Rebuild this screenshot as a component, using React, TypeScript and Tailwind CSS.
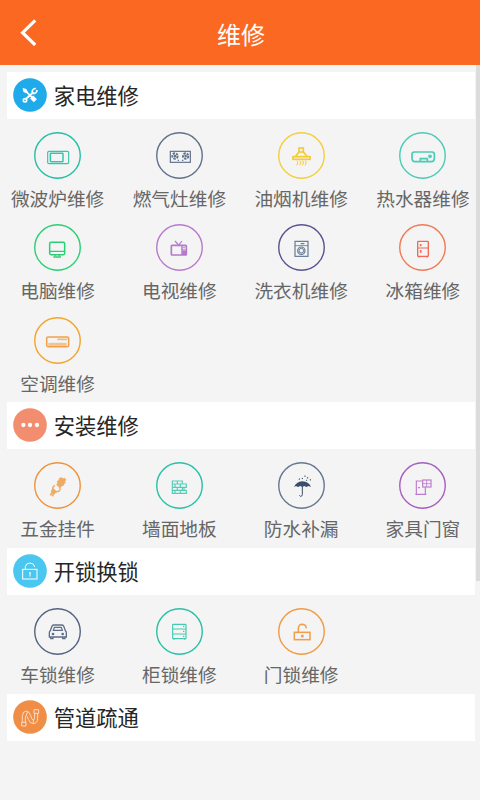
import React from "react";

type Item = { name: string; ring: string; color: string; icon: React.ReactNode };
type Section = { title: string; badge: string; icon: React.ReactNode; items: Item[] };

// Item icons are drawn on a 141 unit grid, section icons on a 102 unit grid
const sections: Section[] = [
  {
    title: "家电维修",
    badge: "#1faaea",
    icon: (
      <>
        <path d="M36 37L65 66" strokeWidth={5} />
        <path d="M29 30L40 33L44 41L39 46L31 41Z" fill="currentColor" stroke="none" />
        <path d="M56 57L67 68" strokeWidth={13} />
        <path d="M38 64L61 43" strokeWidth={6} />
        <path d="M68 31L61 34Q55 39 60 45Q66 49 71 41L72 36" strokeWidth={5} />
        <circle cx={36} cy={67} r={5} strokeWidth={5} />
      </>
    ),
    items: [
      {
        name: "微波炉维修",
        ring: "#25bfa3",
        color: "#36c5ad",
        icon: (
          <>
            <rect x={41} y={58} width={63} height={37} rx={4} />
            <rect x={49} y={64} width={38} height={25} rx={2} strokeWidth={4.5} />
          </>
        ),
      },
      {
        name: "燃气灶维修",
        ring: "#60718c",
        color: "#60718c",
        icon: (
          <>
            <rect x={43} y={58} width={60} height={33} />
            <circle cx={57} cy={72} r={8} strokeWidth={6} strokeDasharray="7 3" />
            <circle cx={57} cy={72} r={2} />
            <circle cx={89} cy={72} r={8} strokeWidth={6} strokeDasharray="7 3" />
            <circle cx={89} cy={72} r={2} />
            <path d="M65 85h4M78 85h4" />
          </>
        ),
      },
      {
        name: "油烟机维修",
        ring: "#f3cf3d",
        color: "#f2cb38",
        icon: (
          <>
            <rect x={63} y={48} width={13} height={12} strokeWidth={5} />
            <path d="M63 60L53 73M76 60L87 73" strokeWidth={5} />
            <rect x={45} y={74} width={51} height={8} strokeWidth={5} />
            <path
              d="M56 86q6 3 3 7l-3 7M65 86q6 3 3 7l-3 7M73 86q6 3 3 7l-3 7M81 86q6 3 3 7l-3 7"
              strokeWidth={3}
            />
          </>
        ),
      },
      {
        name: "热水器维修",
        ring: "#4accb5",
        color: "#4accb5",
        icon: (
          <>
            <path
              d="M46 60H99Q106 60 106 67V79Q106 89 97 89H48Q39 89 39 79V67Q39 60 46 60Z"
              strokeWidth={5}
            />
            <path d="M64 89V80H85V89" strokeWidth={5} />
            <circle cx={93} cy={73} r={5.5} fill="currentColor" stroke="none" />
          </>
        ),
      },
      {
        name: "电脑维修",
        ring: "#2bce75",
        color: "#2bce75",
        icon: (
          <>
            <rect x={47} y={55} width={45} height={37} rx={4} strokeWidth={4.5} />
            <path d="M47 82H92M63 92V97M76 92V97" />
            <path d="M58 99H81" strokeWidth={4.5} />
          </>
        ),
      },
      {
        name: "电视维修",
        ring: "#b67bcd",
        color: "#b578cc",
        icon: (
          <>
            <path d="M57 51L68 63L78 51" />
            <rect x={46} y={64} width={45} height={29} rx={2} strokeWidth={5} />
            <path d="M78 64V93" strokeWidth={4.5} />
            <rect x={79} y={79} width={12} height={14} fill="currentColor" stroke="none" />
            <path d="M82 70h4M82 76h4" />
          </>
        ),
      },
      {
        name: "洗衣机维修",
        ring: "#59538f",
        color: "#627891",
        icon: (
          <>
            <rect x={51} y={52} width={39} height={45} />
            <path d="M51 65H90" strokeWidth={2.5} />
            <path d="M68 59H79" />
            <circle cx={70} cy={80} r={11} />
            <circle cx={70} cy={80} r={7} strokeWidth={3} />
          </>
        ),
      },
      {
        name: "冰箱维修",
        ring: "#f07a55",
        color: "#f26955",
        icon: (
          <>
            <rect x={56} y={52} width={32} height={45} rx={2} strokeWidth={4} />
            <path d="M56 72H88M60 97v4M84 97v4" />
            <path d="M65 60v7M65 78v8" strokeWidth={5} />
          </>
        ),
      },
      {
        name: "空调维修",
        ring: "#f2a42c",
        color: "#f0a04c",
        icon: (
          <>
            <rect x={38} y={60} width={66} height={29} rx={4} strokeWidth={4.5} />
            <path d="M70 67H100" strokeWidth={5} opacity={0.7} />
            <path d="M43 82H98" strokeWidth={9} opacity={0.6} />
          </>
        ),
      },
    ],
  },
  {
    title: "安装维修",
    badge: "#f28d6f",
    icon: (
      <g fill="currentColor" stroke="none">
        <circle cx={31} cy={51} r={6.5} />
        <circle cx={51} cy={51} r={6.5} />
        <circle cx={72} cy={51} r={6.5} />
      </g>
    ),
    items: [
      {
        name: "五金挂件",
        ring: "#ec943d",
        color: "#edab65",
        icon: (
          <>
            <path
              d="M76 49L84 47L87 50L93 49L96 54L92 58L95 61L89 66L90 69L83 72L78 78L68 69L71 62L69 59L75 54Z"
              fill="currentColor"
              strokeWidth={2}
            />
            <path d="M63 70Q55 73 57 81Q61 89 70 89Q79 88 78 78" strokeWidth={4} />
            <path d="M56 79L52 90L59 96L68 90Z" fill="currentColor" strokeWidth={3} />
            <path d="M54 91L49 100M59 95L55 103" strokeWidth={5} />
          </>
        ),
      },
      {
        name: "墙面地板",
        ring: "#29c1a6",
        color: "#54cdb8",
        icon: (
          <path d="M49 57H79V66H91V76H84V85H91V94H49ZM49 66H79M49 76H84M49 85H84M64 57V66M57 66V76M73 66V76M64 76V85M79 76V85M57 85V94M73 85V94" />
        ),
      },
      {
        name: "防水补漏",
        ring: "#657790",
        color: "#3c4f6a",
        icon: (
          <>
            <path
              d="M48 75Q54 60 73 58Q94 60 99 75L92 72L85 75L79 72L73 75L67 72L60 75L54 72Z"
              fill="currentColor"
              stroke="none"
            />
            <path d="M73 72V98Q72 104 67 103L64 100" strokeWidth={3} />
            <path d="M63 53l2-3M72 51l2-3M80 44l2-3M88 49l2-3M96 55l2-3M85 56l2-2" />
          </>
        ),
      },
      {
        name: "家具门窗",
        ring: "#a75cc0",
        color: "#bc7bd0",
        icon: (
          <>
            <path d="M70 57H52V97H79V76M49 97H82M57 77H63" />
            <rect x={71} y={54} width={25} height={21} />
            <path d="M83 54V75M71 65H96" strokeWidth={2.5} />
          </>
        ),
      },
    ],
  },
  {
    title: "开锁换锁",
    badge: "#49c7f1",
    icon: (
      <>
        <rect x={29} y={46} width={43} height={29} />
        <path d="M37 46V38Q38 28 51 27Q64 28 65 39" />
        <path d="M51 55V68M48 57H54" />
      </>
    ),
    items: [
      {
        name: "车锁维修",
        ring: "#536480",
        color: "#5d6d89",
        icon: (
          <>
            <path
              d="M49 68L54 54Q56 51 60 51H83Q87 51 89 54L94 68Q97 70 97 75V87H46V75Q46 70 49 68Z"
              strokeWidth={4}
            />
            <path d="M58 67L61 58H82L85 67ZM50 87V92H57V87M86 87V92H93V87" />
            <circle cx={57} cy={78} r={4} fill="currentColor" stroke="none" />
            <circle cx={86} cy={78} r={4} fill="currentColor" stroke="none" />
          </>
        ),
      },
      {
        name: "柜锁维修",
        ring: "#29c1a6",
        color: "#43c9b0",
        icon: (
          <>
            <rect x={50} y={49} width={40} height={43} rx={2} />
            <path d="M50 63H90M50 78H90M54 92v3M86 92v3" />
            <path d="M81 55h4M81 70h4M81 85h4" strokeWidth={4} />
          </>
        ),
      },
      {
        name: "门锁维修",
        ring: "#f19a43",
        color: "#f19d4a",
        icon: (
          <>
            <rect x={49} y={73} width={47} height={22} strokeWidth={4.5} />
            <path d="M61 73V61Q62 49 73 49Q84 50 85 61" strokeWidth={4.5} />
            <circle cx={73} cy={84} r={4.5} fill="currentColor" stroke="none" />
          </>
        ),
      },
    ],
  },
  {
    title: "管道疏通",
    badge: "#f18e46",
    icon: (
      <g strokeWidth={2.8} opacity={0.75}>
        <path d="M28 67V47Q29 34 40 33Q49 34 53 47Q57 60 60 60Q65 60 65 52V40M37 67V53Q37 46 40 46Q43 47 46 58Q51 71 61 71Q74 70 74 54V40" />
        <path d="M26 67H39V78H26ZM63 29H77V40H63Z" />
        <path d="M44 35L40 45M61 60V71" />
      </g>
    ),
    items: [],
  },
];

function ServiceItem({ item }: { item: Item }) {
  return (
    <div className="flex h-[92.2px] flex-col items-center pt-[6.5px]">
      <svg
        viewBox="0 0 141 141"
        className="h-[47px] w-[47px] shrink-0"
        fill="none"
        stroke="currentColor"
        strokeWidth={3.5}
        style={{ color: item.color }}
      >
        <circle cx={70.5} cy={70.5} r={68.3} stroke={item.ring} strokeWidth={4.2} />
        {item.icon}
      </svg>
      <span className="mt-[5px] whitespace-nowrap text-[18.7px] leading-[28px] text-[#666]">
        {item.name}
      </span>
    </div>
  );
}

export default function App() {
  return (
    <div className="relative h-[800px] w-[480px] overflow-hidden bg-[#f4f4f4] font-['Noto_Sans_CJK_SC',sans-serif]">
      <header className="grid h-[65px] grid-cols-[60px_1fr_58px] items-center bg-[#fb6821] text-white">
        <button className="pl-5" aria-label="返回">
          <svg viewBox="0 0 17 27" className="h-[27px] w-[17px]" fill="none" stroke="currentColor" strokeWidth={3.2}>
            <path d="M15.2 1.3L2.6 13.7L15.2 26" />
          </svg>
        </button>
        <h1 className="pt-[2px] text-center text-[24px] leading-[32px]">维修</h1>
      </header>

      <main className="mr-[5px] ml-[7px] pt-[7px]">
        {sections.map((section) => (
          <section key={section.title}>
            <div className="flex h-[47px] items-center bg-white pl-[6.3px]">
              <svg
                viewBox="0 0 102 102"
                className="mb-px h-[34px] w-[34px] text-white"
                fill="none"
                stroke="currentColor"
                strokeWidth={3}
              >
                <circle cx={51} cy={51} r={50.5} fill={section.badge} stroke="none" />
                {section.icon}
              </svg>
              <h2 className="mb-px ml-[6.4px] text-[21.3px] leading-[32px] text-[#262626]">{section.title}</h2>
            </div>
            {section.items.length > 0 && (
              <div className="ml-[3.8px] grid grid-cols-[repeat(4,93.6px)] gap-x-[28.2px] pt-[6.7px]">
                {section.items.map((item) => (
                  <ServiceItem key={item.name} item={item} />
                ))}
              </div>
            )}
          </section>
        ))}
      </main>

      {/* Scrollbar */}
      <div className="absolute top-[65px] right-0 h-[516px] w-1 bg-[#dcdcdc]" />
    </div>
  );
}
